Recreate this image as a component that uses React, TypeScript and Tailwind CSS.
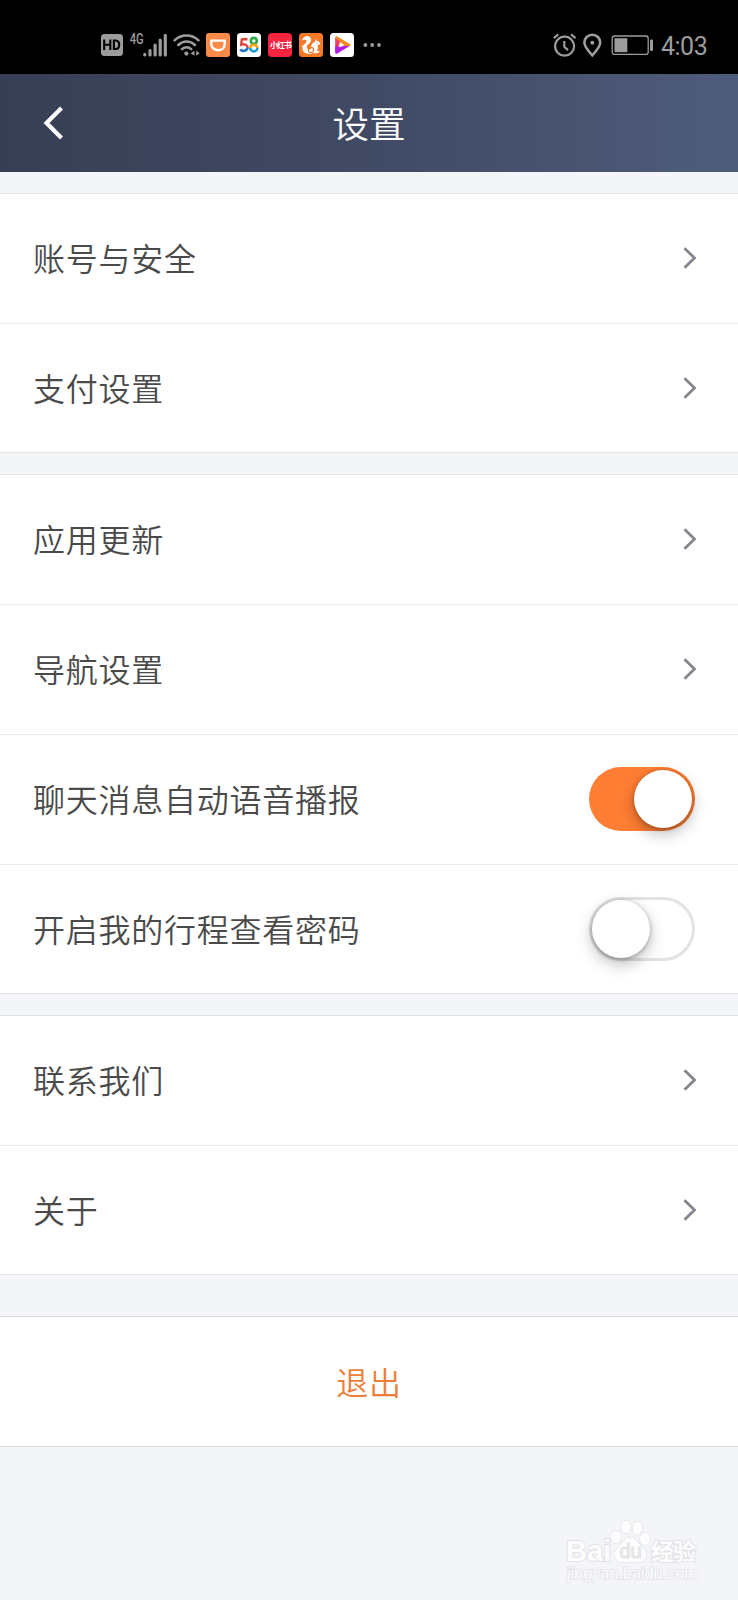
import type { ReactNode } from "react";

function StatusBar() {
  return (
    <div className="flex h-[74px] items-start bg-black pt-[33px] pr-[31px] pl-[101px] font-normal text-[#9c9c9c]">
      <svg className="mt-[1px] h-[22px] w-[22px] shrink-0" viewBox="0 0 22 22">
        <rect width="22" height="22" rx="3.5" fill="#9c9c9c" />
        <path d="M3.2 5.5v10.5M9.3 5.5v10.5M3.2 10.7h6M12.9 6.5v8.5h1.6c2.6 0 3.7-1.6 3.7-4.2s-1.1-4.3-3.7-4.3z" fill="none" stroke="#000" strokeWidth="2.1" />
      </svg>
      <span className="ml-[7px] flex h-[12px] w-[13px] items-center justify-center font-['Roboto',sans-serif] text-[14px] leading-none font-medium">
        <span className="inline-block scale-x-80">4G</span>
      </span>
      <svg className="h-[24px] w-[25px] shrink-0" viewBox="0 0 25 24">
        <path d="M1.8 22v-.6M7 22v-4.5M12.1 22V12M17.2 22V7M22.3 22V2.3" stroke="#9c9c9c" strokeWidth="3.2" strokeLinecap="round" />
      </svg>
      <svg className="ml-[5px] h-[24px] w-[27px] shrink-0" viewBox="0 0 27 24" fill="none" stroke="#9c9c9c" strokeLinecap="round">
        <path d="M1.5 7.3c6.5-6.5 17.5-6.5 24 0M5.3 12c4.6-4.6 12-4.6 16.6 0M9 16.2c2.6-2.5 6.6-2.5 9.2 0" strokeWidth="2.5" />
        <circle cx="13.4" cy="20.6" r="2.1" fill="#9c9c9c" stroke="none" />
        <path d="M17.5 20.3l4-2.5v5zM26.7 20.3l-3.5-2.5v5z" fill="#9c9c9c" stroke="none" />
      </svg>
      <svg className="ml-[6px] h-[24px] w-[24px] shrink-0" viewBox="0 0 24 24">
        <rect width="24" height="24" rx="3" fill="#fa8a48" />
        <path d="M5.3 7.6h13.4v3.2c0 4-2.5 6.4-6.3 6.4-4 0-7.1-2.4-7.1-6.2z" fill="none" stroke="#fff" strokeWidth="2.4" strokeLinejoin="round" />
      </svg>
      <svg className="ml-[7px] h-[24px] w-[24px] shrink-0" viewBox="0 0 24 24" fill="none">
        <rect width="24" height="24" rx="3.5" fill="#fff" />
        <path d="M10.5 6.2H4.6" stroke="#e0433c" strokeWidth="2.6" />
        <path d="M4.8 5.5l-.5 6.2c3.2-1.2 6.4.3 6.2 3.2" stroke="#e0433c" strokeWidth="2.4" />
        <path d="M10.5 14.5c-.2 3.7-5.2 4.3-7.3 2" stroke="#1c78cf" strokeWidth="2.6" />
        <circle cx="16.8" cy="7.9" r="3" stroke="#29a744" strokeWidth="2.6" />
        <path d="M13.2 15.1a3.6 3.4 0 0 1 7.2 0" stroke="#f5a21d" strokeWidth="2.6" />
        <path d="M20.4 15a3.6 3.4 0 0 1-7.2 0" stroke="#239ed0" strokeWidth="2.6" />
      </svg>
      <span className="ml-[7px] flex h-[24px] w-[24px] shrink-0 items-center justify-center rounded-[4px] bg-[#f5243f] font-['Noto_Sans_CJK_SC',sans-serif] text-[8px] leading-none font-bold tracking-[-1px] text-white">
        <span className="-mr-px inline-block whitespace-nowrap">小红书</span>
      </span>
      <svg className="ml-[7px] h-[24px] w-[24px] shrink-0" viewBox="0 0 24 24">
        <rect width="24" height="24" rx="3.5" fill="#f47a27" />
        <path d="M3 7.3C4.2 4 7.7 2 10.6 3.8c2.4 1.6 2 4.5-.2 6.5-1.8 1.7-3.3 3.2-2.5 5.3l2.3.9c2 .5 2.2-.8 1.8-2.4.1-3 2.4-4.7 4.2-5.5l.2-2.5 1.6 1.8 1.6.3 1.7 2.2-1 1.3-1.7.3c.3 1.6.5 4.3-.6 5.8l3.1.7c-2.2 1.7-5 2.2-7 1.5-2.8 1.5-7.5 1.4-9.6-1.4-1.2-1.7-1.2-3.4-.5-4.8l-2-.4 3-1.6c1.3-1.3 2.7-2.5 2.5-4-.3-1.2-2.4-1.4-4.5-.5z" fill="#fff" />
        <circle cx="12" cy="17" r="2.6" fill="none" stroke="#f47a27" strokeWidth="1.1" />
        <circle cx="17.8" cy="10" r=".6" fill="#f47a27" />
      </svg>
      <svg className="ml-[7px] h-[24px] w-[24px] shrink-0" viewBox="0 0 24 24">
        <rect width="24" height="24" rx="3.5" fill="#fff" />
        <path d="M5.2 4.6c0-1.3 1-1.7 2.2-1.1l12.4 7.4c1 .6 1 1.4 0 2L16 15z" fill="#f58a1f" />
        <path d="M5.2 4.6v14.3l5.3-9.6z" fill="#ee3d5d" />
        <path d="M5.2 13.5v5.9c0 1.4 1 1.8 2.2 1.1l12.4-7.8z" fill="#b51ae0" />
        <path d="M9.7 9.2v5.4l4.7-2.6z" fill="#fff" />
      </svg>
      <svg className="ml-[9px] h-[24px] w-[20px] shrink-0" viewBox="0 0 20 24" fill="#9c9c9c">
        <circle cx="2.4" cy="12" r="1.9" />
        <circle cx="9.2" cy="12" r="1.9" />
        <circle cx="16" cy="12" r="1.9" />
      </svg>
      <svg className="ml-auto h-[24px] w-[24px] shrink-0" viewBox="0 0 24 24" fill="none" stroke="#9c9c9c" strokeWidth="2.2">
        <circle cx="11.6" cy="13.2" r="9.5" />
        <path d="M11.3 8v5.8l3.7 3.3M.8 5.2l4.4-3.8M22.5 5.2l-4.4-3.8" />
      </svg>
      <svg className="ml-[6px] h-[24px] w-[19px] shrink-0" viewBox="0 0 19 24" fill="none" stroke="#9c9c9c">
        <path d="M9.3 22.4C5.5 18.4 1.4 14 1.4 9.6a7.9 7.9 0 0 1 15.8 0c0 4.4-4.1 8.8-7.9 12.8z" strokeWidth="2.6" />
        <circle cx="9.3" cy="9.8" r="2" fill="#9c9c9c" stroke="none" />
      </svg>
      <svg className="ml-[9px] h-[24px] w-[43px] shrink-0" viewBox="0 0 43 24">
        <rect x="1.2" y="3" width="36" height="18.4" rx="2.5" fill="none" stroke="#9c9c9c" strokeWidth="1.3" />
        <rect x="3.5" y="5.2" width="12.8" height="14" fill="#9c9c9c" />
        <rect x="39" y="6.5" width="3" height="11.5" rx="1.3" fill="#9c9c9c" />
      </svg>
      <span className="ml-[7px] w-[46px] font-['Roboto',sans-serif] text-[25px] leading-[28px] tracking-[-0.5px] whitespace-nowrap">4:03</span>
    </div>
  );
}

function Row({ label, children }: { label: string; children?: ReactNode }) {
  return (
    <div className="flex h-[130px] items-center justify-between border-b border-[#ececec] pr-[43px] pb-[1px] pl-[33px] last:h-[128px] last:border-b-0 last:pb-0">
      <span className="pb-[2px] text-[32px] leading-[48px] tracking-[0.75px]">{label}</span>
      {children ?? (
        <svg className="mr-[-4px] h-[24px] w-[16px]" viewBox="0 0 16 24" fill="none" stroke="#85858f" strokeWidth="2.8">
          <path d="M1.5 2.2L11.5 12 1.5 21.8" />
        </svg>
      )}
    </div>
  );
}

function Group({ children }: { children: ReactNode }) {
  return <section className="mt-[21px] border-y border-[#e2e3e5] bg-white">{children}</section>;
}

function Toggle({ on = false }: { on?: boolean }) {
  return (
    <button
      className={
        on
          ? "flex h-[64px] w-[106px] items-center justify-end rounded-full bg-[#ff7e33] pr-[3px]"
          : "flex h-[64px] w-[106px] items-center rounded-full border-[3px] border-[#e3e3e3] bg-white"
      }
    >
      <span className="h-[58px] w-[58px] rounded-full bg-white shadow-[0_6px_16px_rgba(0,0,0,0.26),0_1px_4px_rgba(0,0,0,0.28)]" />
    </button>
  );
}

function Watermark() {
  return (
    <svg className="mt-[72px] ml-[560px] h-[70px] w-[145px]" viewBox="0 0 145 70" stroke="#e1e3e6" strokeWidth="2" paintOrder="stroke" fill="#fdfdfe">
      <text x="6" y="42" fontFamily="Liberation Sans, sans-serif" fontWeight="700" fontSize="29" textLength="45">Bai</text>
      <g strokeWidth="1.3">
        <ellipse cx="56" cy="18" rx="5" ry="6.5" />
        <ellipse cx="66" cy="8" rx="5" ry="6.5" />
        <ellipse cx="77.5" cy="9" rx="5" ry="6.5" />
        <ellipse cx="85" cy="20" rx="5" ry="6.5" />
        <path d="M70 18.5c5 0 7.5 4.500 11 8.500 4 4 7 6.500 5 11.500-2 5.500-7 5-16 4.500-9 .5-13 1-15-4.500-2-5 1-8 5-11.500 3.500-4 5-8.500 10-8.500z" />
      </g>
      <text x="59.5" y="39" fontFamily="Liberation Sans, sans-serif" fontWeight="400" fontSize="20" textLength="22" stroke="#dcdee1" strokeWidth="1" fill="#e6e8eb">du</text>
      <text x="91" y="41" fontFamily="Noto Sans CJK SC, sans-serif" fontWeight="700" fontSize="23" textLength="45">经验</text>
      <text x="7" y="60" fontFamily="Liberation Sans, sans-serif" fontWeight="400" fontSize="16.5" textLength="131" strokeWidth="1.5">jingyan.baidu.com</text>
    </svg>
  );
}

export default function App() {
  return (
    <div className="h-[1600px] w-[738px] overflow-hidden bg-[#f4f5f8] font-['Noto_Sans_CJK_SC',sans-serif] font-[350] text-[#4a4a4a]">
      <StatusBar />
      <header className="flex h-[98px] items-center bg-linear-to-r from-[#383f54] via-[#414a64] to-[#4e5c7b] px-[43px] text-white">
        <svg className="h-[34px] w-[22px]" viewBox="0 0 22 34" fill="none" stroke="#fff" strokeWidth="4.2">
          <path d="M18.5 2L3.5 17l15 15" />
        </svg>
        <h1 className="flex-1 pr-[22px] text-center text-[36.5px] leading-[52px]">设置</h1>
      </header>
      <Group>
        <Row label="账号与安全" />
        <Row label="支付设置" />
      </Group>
      <Group>
        <Row label="应用更新" />
        <Row label="导航设置" />
        <Row label="聊天消息自动语音播报">
          <Toggle on />
        </Row>
        <Row label="开启我的行程查看密码">
          <Toggle />
        </Row>
      </Group>
      <Group>
        <Row label="联系我们" />
        <Row label="关于" />
      </Group>
      <button className="mt-[41px] flex h-[131px] w-full items-center justify-center border-y border-[#d8dade] bg-white pb-[2px] text-[32px] leading-[48px] tracking-[0.7px] text-[#ee7f3b]">
        退出
      </button>
      <Watermark />
    </div>
  );
}
